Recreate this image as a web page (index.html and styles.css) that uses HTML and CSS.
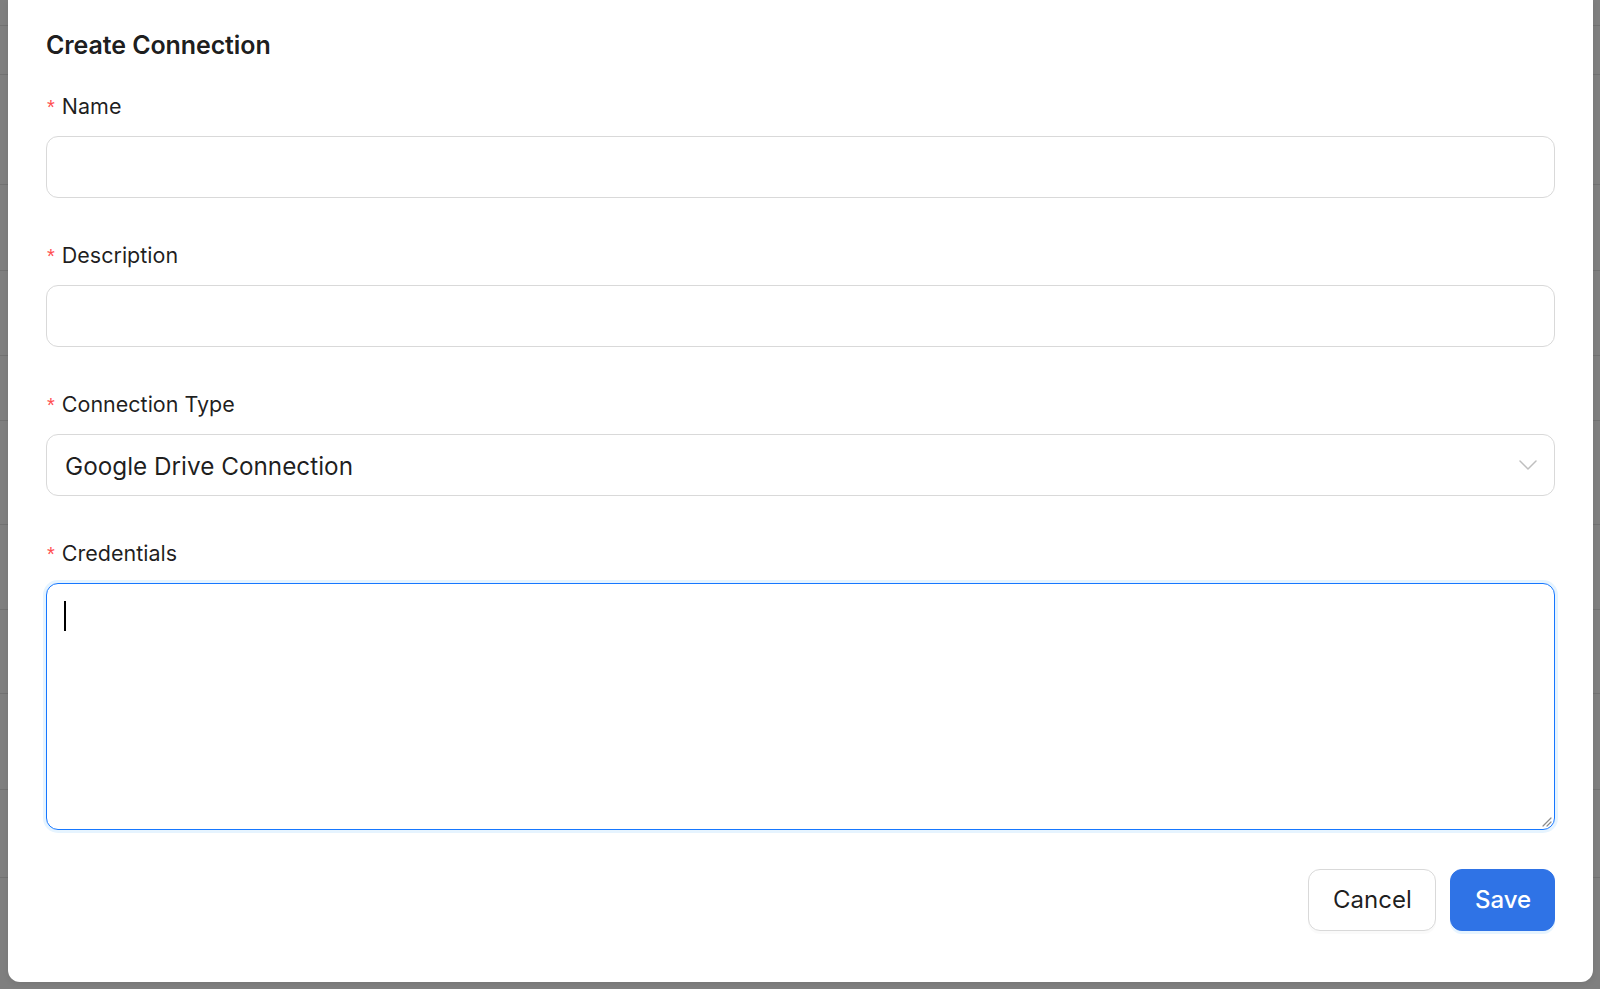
FILE: index.html
```html
<!DOCTYPE html>
<html lang="en">
<head>
<meta charset="utf-8">
<title>Create Connection</title>
<link rel="stylesheet" href="styles.css">
</head>
<body>
<div class="backdrop">
  <div class="modal">
    <h1 class="title">Create Connection</h1>
    <form class="form">
      <div class="field">
        <label class="label"><span class="req">*</span>Name</label>
        <div class="input"></div>
      </div>
      <div class="field">
        <label class="label"><span class="req">*</span>Description</label>
        <div class="input"></div>
      </div>
      <div class="field">
        <label class="label"><span class="req">*</span>Connection Type</label>
        <div class="input select">
          <span class="select-value">Google Drive Connection</span>
          <svg class="chevron" width="18" height="10" viewBox="0 0 18 10" aria-hidden="true">
            <path d="M1 1 L9 9 L17 1" fill="none" stroke="#bfbfbf" stroke-width="1.5" stroke-linecap="round" stroke-linejoin="round"/>
          </svg>
        </div>
      </div>
      <div class="field last">
        <label class="label"><span class="req">*</span>Credentials</label>
        <div class="textarea">
          <span class="caret"></span>
          <svg class="grip" width="12" height="12" viewBox="0 0 12 12" aria-hidden="true">
            <path d="M11 3 L3 11 M11 7 L7 11" stroke="#8c8c8c" stroke-width="1.2" stroke-linecap="round"/>
          </svg>
        </div>
      </div>
      <div class="actions">
        <button type="button" class="btn btn-default">Cancel</button>
        <button type="button" class="btn btn-primary">Save</button>
      </div>
    </form>
  </div>
</div>
</body>
</html>
```
FILE: styles.css
```css
* { box-sizing: border-box; }
html, body {
  margin: 0;
  padding: 0;
  height: 100%;
}
body {
  font-family: Inter, "Noto Sans", "Liberation Sans", sans-serif;
  color: rgba(0, 0, 0, 0.88);
  background-color: #7f7f7f;
  background-image:
    linear-gradient(#727272, #727272),
    linear-gradient(#727272, #727272),
    linear-gradient(#727272, #727272),
    linear-gradient(#727272, #727272),
    linear-gradient(#727272, #727272),
    linear-gradient(#727272, #727272),
    linear-gradient(#727272, #727272),
    linear-gradient(#727272, #727272),
    linear-gradient(#727272, #727272),
    linear-gradient(#727272, #727272),
    linear-gradient(#727272, #727272);
  background-repeat: no-repeat;
  background-size: 100% 1px;
  background-position:
    0 25px, 0 74px, 0 184px, 0 270px, 0 355px, 0 420px,
    0 524px, 0 609px, 0 693px, 0 789px, 0 877px;
  overflow: hidden;
}
.backdrop {
  height: 100%;
  padding: 0 7px 0 8px;
}
.modal {
  background: #fff;
  height: 982px;
  border-radius: 0 0 12px 12px;
  padding: 27px 38px 0 38px;
  box-shadow: 0 2px 6px rgba(0, 0, 0, 0.08);
}
.title {
  margin: 0;
  font-size: 25px;
  font-weight: 600;
  line-height: 36px;
  letter-spacing: -0.1px;
  color: rgba(0, 0, 0, 0.9);
}
.form {
  margin-top: 27px;
}
.field {
  margin-bottom: 41px;
}
.field.last {
  margin-bottom: 39px;
}
.label {
  display: flex;
  align-items: center;
  font-size: 21.5px;
  line-height: 33px;
  height: 33px;
  margin-bottom: 13px;
  color: rgba(0, 0, 0, 0.88);
}
.req {
  color: #ff4d4f;
  font-size: 20px;
  font-family: "Liberation Sans", sans-serif;
  margin-right: 7px;
  margin-left: 1px;
  position: relative;
  top: 1px;
}
.input {
  height: 62px;
  border: 1.5px solid #d9d9d9;
  border-radius: 12px;
  background: #fff;
}
.select {
  display: flex;
  align-items: center;
  justify-content: space-between;
  padding: 0 17px 0 18px;
}
.select-value {
  font-size: 24.3px;
  color: rgba(0, 0, 0, 0.88);
  position: relative;
  top: 1px;
}
.chevron {
  display: block;
}
.textarea {
  position: relative;
  height: 247px;
  border: 1.5px solid #1677ff;
  border-radius: 12px;
  box-shadow: 0 0 0 3px rgba(5, 145, 255, 0.1);
  background: #fff;
}
.caret {
  position: absolute;
  left: 17px;
  top: 17px;
  width: 2px;
  height: 30px;
  background: #000;
}
.grip {
  position: absolute;
  right: 2px;
  bottom: 2px;
}
.actions {
  display: flex;
  justify-content: flex-end;
  gap: 14px;
}
.btn {
  height: 62px;
  border-radius: 12px;
  font-family: Inter, "Noto Sans", "Liberation Sans", sans-serif;
  font-size: 24px;
  line-height: 1;
  padding: 0 24px;
  cursor: pointer;
}
.btn-default {
  width: 128px;
  background: #fff;
  border: 1.5px solid #d9d9d9;
  color: rgba(0, 0, 0, 0.88);
  box-shadow: 0 3px 0 rgba(0, 0, 0, 0.02);
}
.btn-primary {
  width: 105px;
  background: #2f73e6;
  border: 1.5px solid #2f73e6;
  color: #fff;
  font-weight: 500;
  box-shadow: 0 3px 0 rgba(5, 145, 255, 0.1);
}
```
